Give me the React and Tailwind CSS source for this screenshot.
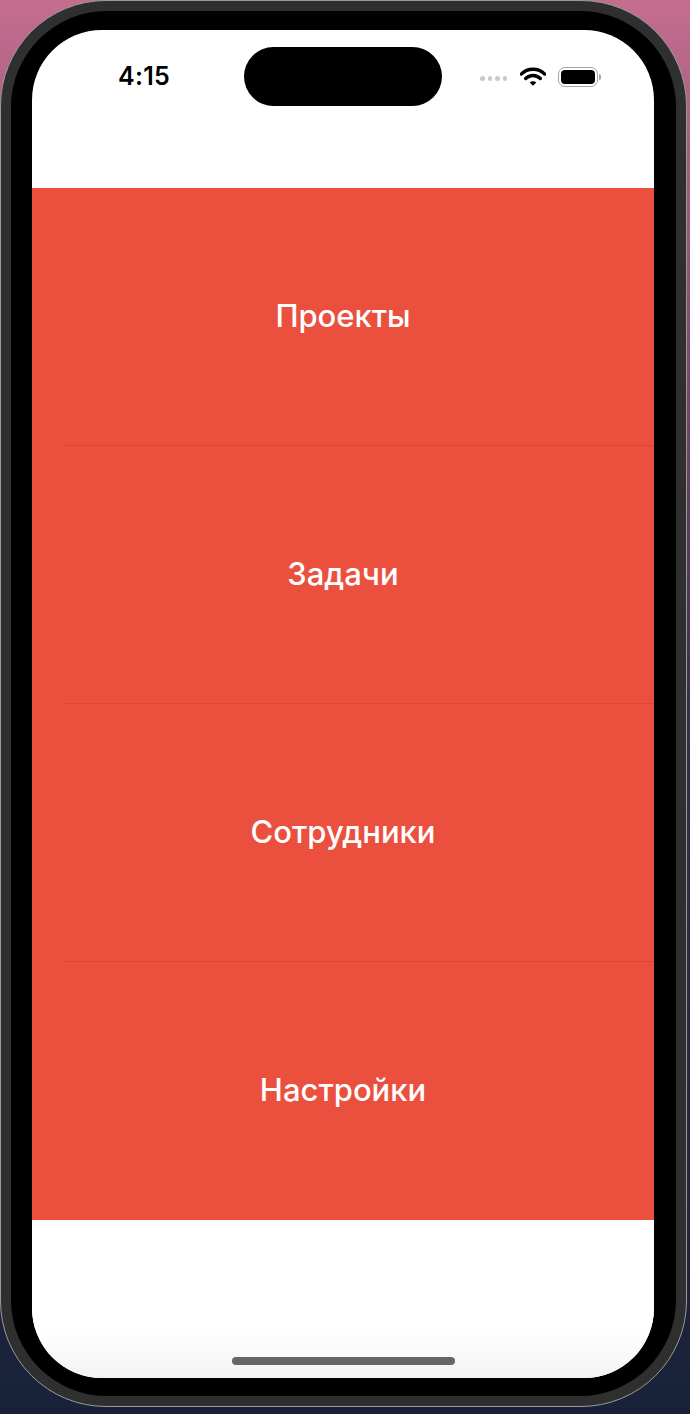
export default function App() {
  const items = ["Проекты", "Задачи", "Сотрудники", "Настройки"];

  return (
    <div className="w-[690px] h-[1414px] overflow-hidden bg-linear-to-b from-[#c56d8f] via-[#3b2c4c] to-[#172238]">
      <div className="w-[687px] h-[1407px] rounded-[106px] border border-[#9a9a9a] bg-[#2f2f2f] p-[10px]">
        <div className="w-full h-full rounded-[96px] bg-black pt-[19px] pl-[21px] pr-[22px] pb-[18px]">
          <div
            className="w-[622px] h-[1348px] rounded-[70px] overflow-hidden bg-white flex flex-col"
            style={{ fontFamily: "Inter, 'Noto Sans', sans-serif" }}
          >
            {/* status bar */}
            <div className="h-[158px] shrink-0 flex items-start">
              <div className="w-[212px] pl-[86px] pt-[31px] text-[25px] leading-[30px] font-semibold text-black tracking-[0.3px]">
                4:15
              </div>
              <div className="mt-[17px] w-[198px] h-[59px] rounded-full bg-black" />
              <div className="ml-[38px] mt-[36px] flex items-center h-[21px]">
                <div className="flex gap-[3px] mt-[4px]">
                  <span className="w-[4.5px] h-[4.5px] rounded-full bg-[#c9c9c9]" />
                  <span className="w-[4.5px] h-[4.5px] rounded-full bg-[#c9c9c9]" />
                  <span className="w-[4.5px] h-[4.5px] rounded-full bg-[#c9c9c9]" />
                  <span className="w-[4.5px] h-[4.5px] rounded-full bg-[#c9c9c9]" />
                </div>
                <svg width="26" height="21" viewBox="0 0 25 20" className="ml-[13px]">
                  <path d="M1.2 7.7 A16 16 0 0 1 23.8 7.7" fill="none" stroke="black" strokeWidth="3.2" strokeLinecap="round" />
                  <path d="M5.43 11.93 A10 10 0 0 1 19.57 11.93" fill="none" stroke="black" strokeWidth="3.2" strokeLinecap="round" />
                  <path d="M12.5 19 L9.3 15.8 A4.5 4.5 0 0 1 15.7 15.8 Z" fill="black" />
                </svg>
                <div className="ml-[12px] flex items-center">
                  <div className="w-[40px] h-[20px] rounded-[7px] border-[1.5px] border-[#a3a3a3] p-[2px]">
                    <div className="w-full h-full rounded-[4px] bg-black" />
                  </div>
                  <div className="w-[2px] h-[6px] rounded-r-[2px] bg-[#a3a3a3] ml-[1px]" />
                </div>
              </div>
            </div>

            {/* menu */}
            <div className="bg-[#eb503f] shrink-0">
              {items.map((item, i) => (
                <div key={item}>
                  <div className="h-[257px] flex items-center justify-center text-white text-[31px] font-medium">
                    {item}
                  </div>
                  {i < items.length - 1 ? (
                    <div className="ml-[32px] h-px bg-[#d94739]" />
                  ) : (
                    <div className="h-px" />
                  )}
                </div>
              ))}
            </div>

            {/* bottom */}
            <div className="flex-1 flex flex-col justify-end items-center pb-[13px] bg-linear-to-b from-white from-70% to-[#f3f3f3]">
              <div className="w-[223px] h-[8px] rounded-full bg-[#666666]" />
            </div>
          </div>
        </div>
      </div>
    </div>
  );
}
